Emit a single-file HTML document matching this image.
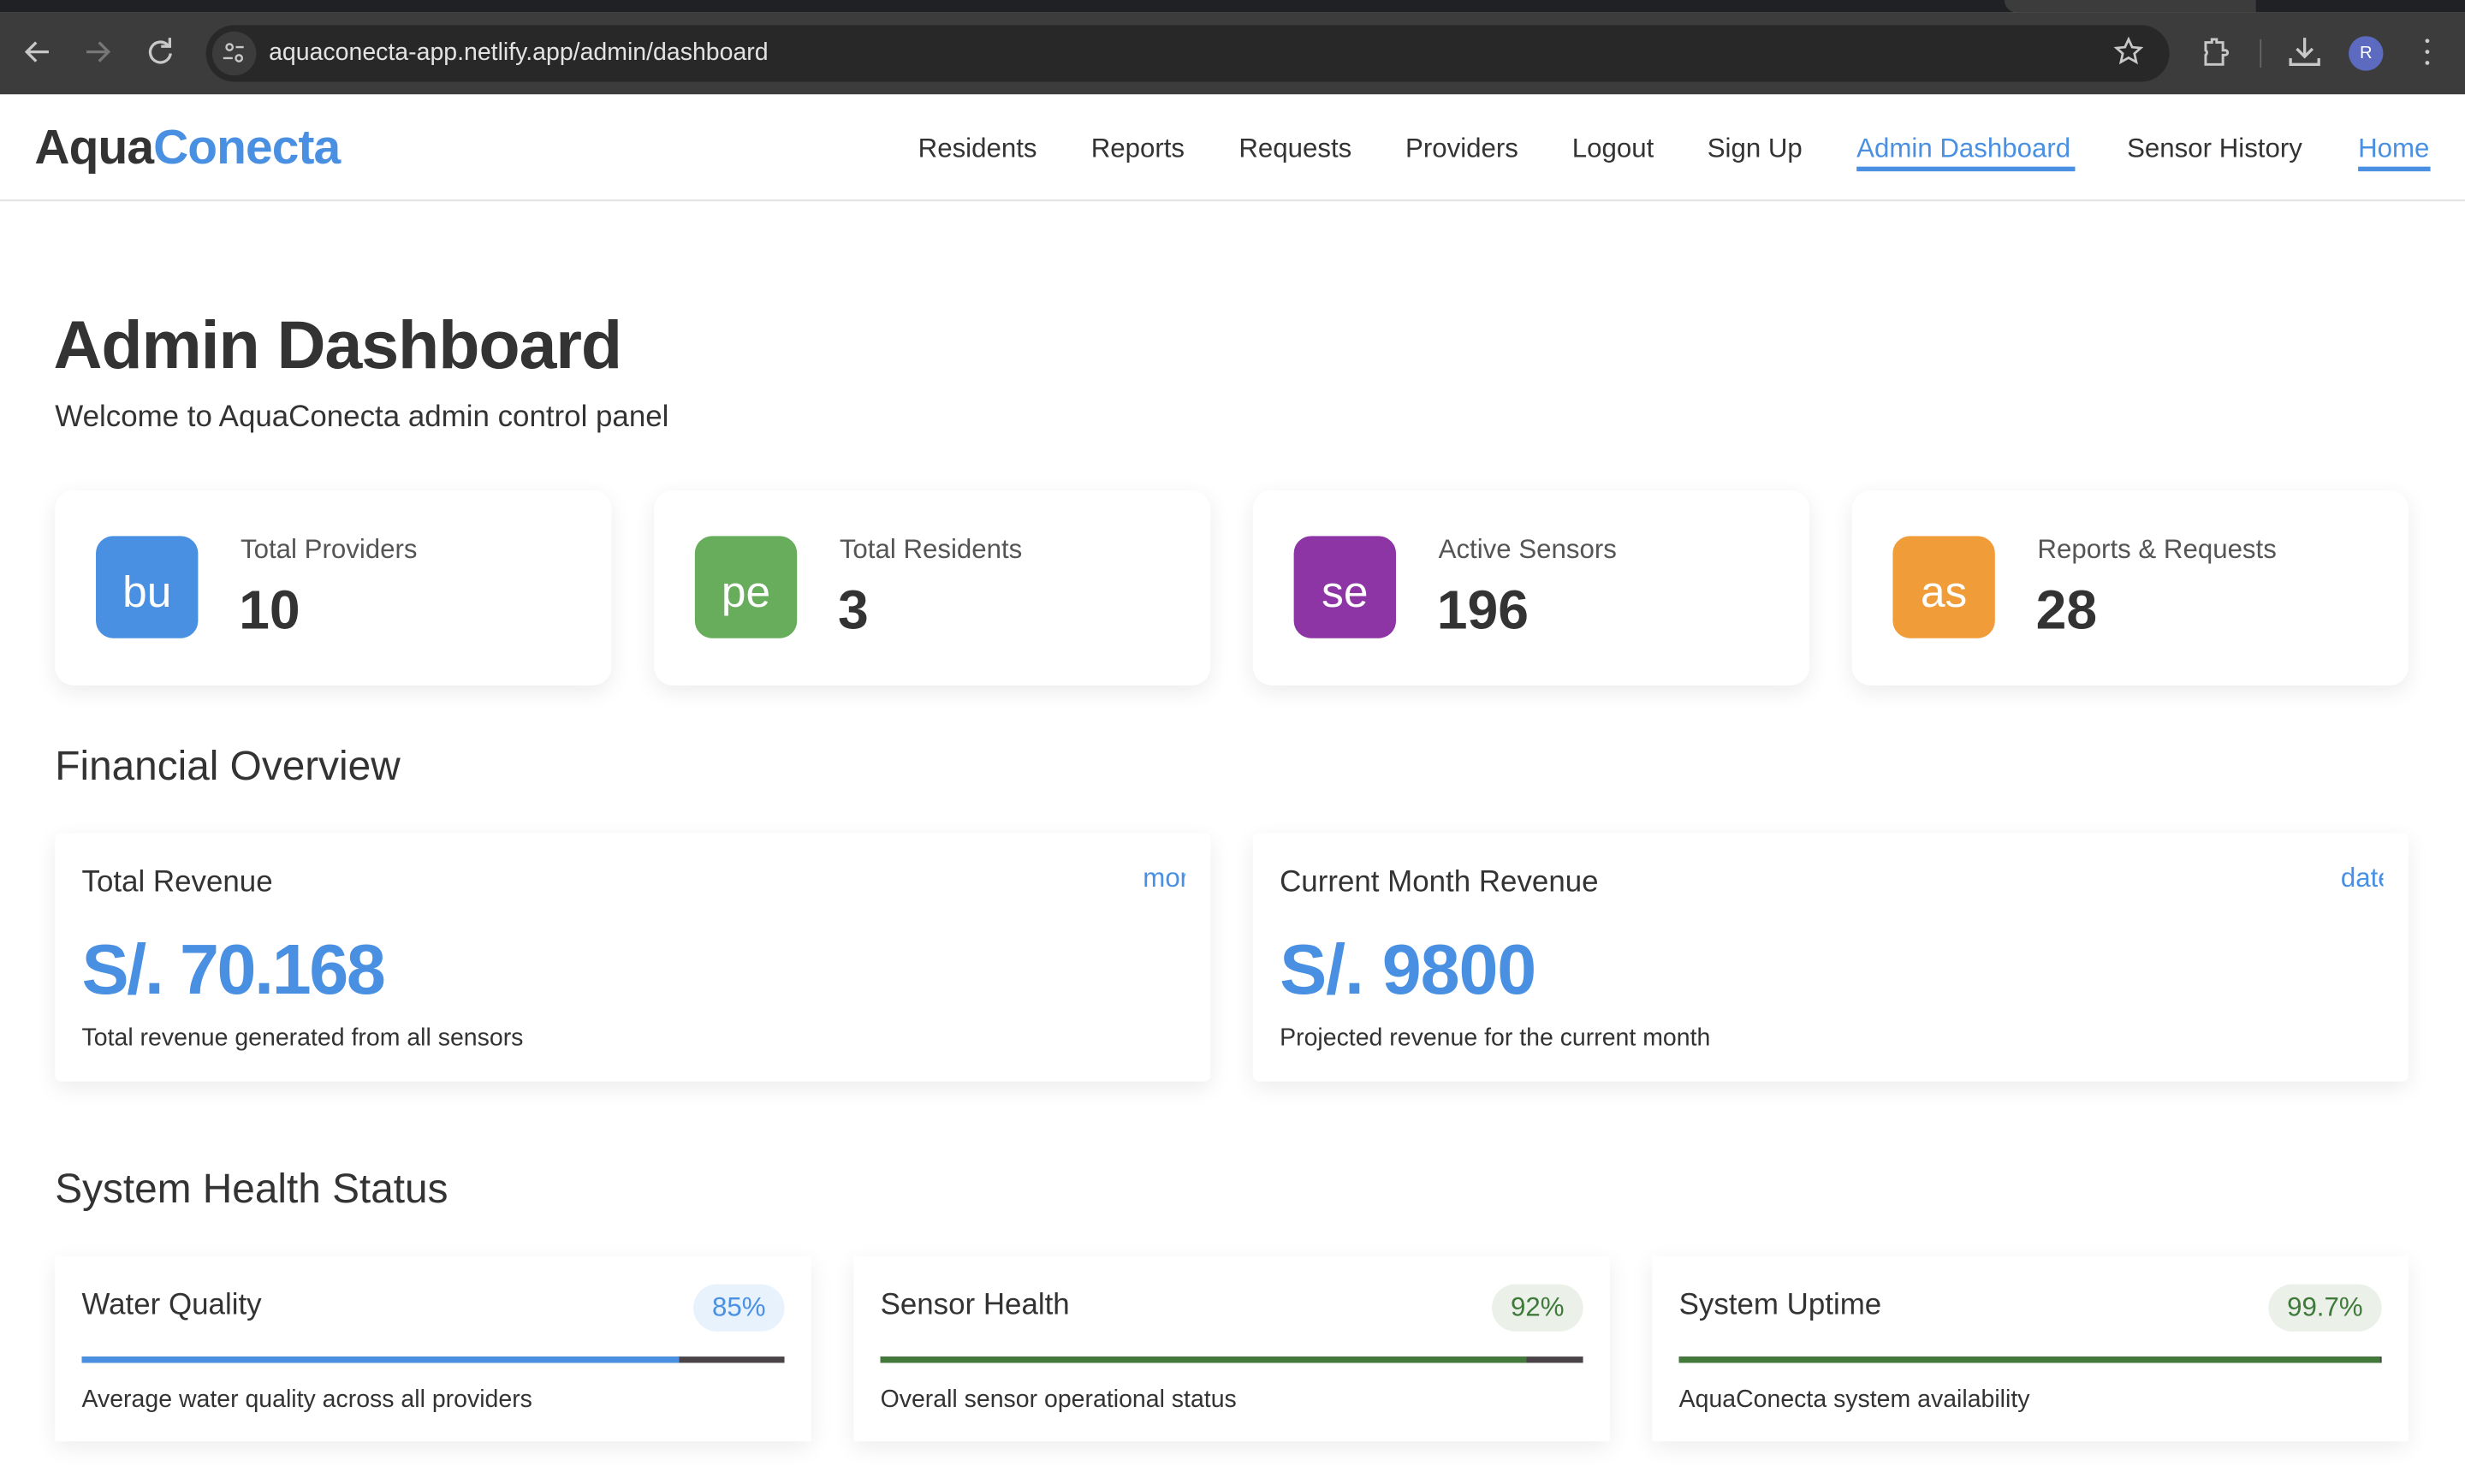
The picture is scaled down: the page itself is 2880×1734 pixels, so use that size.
<!DOCTYPE html>
<html><head><meta charset="utf-8"><style>
html,body{margin:0;padding:0;background:#fff;overflow:hidden;width:2880px;height:1734px}
#w{position:absolute;left:0;top:0;width:1568px;height:944px;transform:scale(1.836735);transform-origin:0 0;font-family:"Liberation Sans",Arial,sans-serif;color:#333}
.a{position:absolute;white-space:nowrap}
.card{position:absolute;background:#fff;box-shadow:0 4px 14px rgba(0,0,0,0.08)}
.ic{position:absolute;left:26px;top:29px;width:65px;height:65px;border-radius:11px;color:#fff;font-size:28px;line-height:72px;text-align:center}
.lbl{position:absolute;left:118px;top:28px;font-size:17px;color:#555}
.val{position:absolute;left:117px;top:57px;font-size:35px;font-weight:bold;color:#333}
.nav{position:absolute;top:85px;font-size:17px;color:#333}
.ttl{position:absolute;left:17px;top:21px;font-size:19px;color:#333}
.badge{position:absolute;top:18px;height:30px;line-height:30px;border-radius:15px;padding:0 12px;font-size:17px}
.bar{position:absolute;left:17px;right:17px;top:64px;height:4px;background:#4a4449}
.desc{position:absolute;left:17px;top:83px;font-size:15.5px;color:#333}
</style></head><body><div id="w">
<div class="a" style="left:0;top:0;width:1568px;height:8px;background:#202124"></div>
<div class="a" style="left:1275px;top:0;width:160px;height:8px;background:#3c3c3c;border-radius:0 0 0 8px"></div>
<div class="a" style="left:0;top:8px;width:1568px;height:52px;background:#3c3c3c"></div>
<div class="a" style="left:131px;top:16px;width:1249px;height:36px;background:#282828;border-radius:18px"></div>
<div class="a" style="left:135px;top:20px;width:28px;height:28px;background:#3c3c3c;border-radius:14px"></div>
<svg class="a" style="left:0;top:8px" width="1568" height="52" fill="none" stroke="#c8c8c8" stroke-width="1.8">
<path d="M31 25H17M23 19l-6 6 6 6"/>
<path d="M55 25h14M63 19l6 6-6 6" stroke="#777"/>
<path d="M107 21a6.5 6.5 0 1 0 1.5 5M108 16v5.5h-5.5"/>
<circle cx="146" cy="22" r="2" stroke-width="1.3"/><circle cx="152" cy="29" r="2" stroke-width="1.3"/><path d="M150 22h5M142 29h6" stroke-width="1.3"/>
<path d="M1354 17l2.3 5 5.4.5-4 3.6 1.2 5.4-4.9-2.8-4.9 2.8 1.2-5.4-4-3.6 5.4-.5z" stroke-width="1.5"/>
<path d="M1403 19h4v-2h3v2h4v5h1.5a1.5 1.5 0 0 1 0 3H1414v6h-11v-6a1.8 1.8 0 0 0 0-3z" stroke-width="1.6"/>
<path d="M1438 17v18" stroke="#666" stroke-width="1"/>
<path d="M1466 16v12M1461 23l5 5 5-5M1457 29v4h18v-4" stroke-width="1.8"/>
<circle cx="1544" cy="18" r="1.3" fill="#ccc" stroke="none"/><circle cx="1544" cy="25" r="1.3" fill="#ccc" stroke="none"/><circle cx="1544" cy="32" r="1.3" fill="#ccc" stroke="none"/>
</svg>
<div class="a" style="left:1494px;top:23px;width:22px;height:22px;border-radius:11px;background:#5c6bc0;color:#fff;font-size:11px;line-height:22px;text-align:center">R</div>
<div class="a" style="left:171px;top:25px;font-size:15.5px;color:#e3e3e3">aquaconecta-app.netlify.app/admin/dashboard</div>

<div class="a" style="left:0;top:127px;width:1568px;height:1px;background:#e0e0e0"></div>
<div class="a" style="left:22px;top:76px;font-size:31px;font-weight:bold;letter-spacing:-0.5px"><span style="color:#333">Aqua</span><span style="color:#4a90e2">Conecta</span></div>
<div class="nav" style="left:584px">Residents</div>
<div class="nav" style="left:694px">Reports</div>
<div class="nav" style="left:788px">Requests</div>
<div class="nav" style="left:894px">Providers</div>
<div class="nav" style="left:1000px">Logout</div>
<div class="nav" style="left:1086px">Sign Up</div>
<div class="nav" style="left:1181px;color:#4a90e2">Admin Dashboard</div>
<div class="a" style="left:1181px;top:106px;width:139px;height:3px;background:#4a90e2"></div>
<div class="nav" style="left:1353px">Sensor History</div>
<div class="nav" style="left:1500px;color:#4a90e2">Home</div>
<div class="a" style="left:1500px;top:106px;width:46px;height:3px;background:#4a90e2"></div>

<div class="a" style="left:34px;top:196px;font-size:43px;font-weight:bold;color:#333;letter-spacing:-0.6px">Admin Dashboard</div>
<div class="a" style="left:35px;top:255px;font-size:19px;color:#333">Welcome to AquaConecta admin control panel</div>

<div class="card" style="left:35px;top:312px;width:354px;height:124px;border-radius:12px"><div class="ic" style="background:#4a90e2">bu</div><div class="lbl">Total Providers</div><div class="val">10</div></div>
<div class="card" style="left:416px;top:312px;width:354px;height:124px;border-radius:12px"><div class="ic" style="background:#67ad5b">pe</div><div class="lbl">Total Residents</div><div class="val">3</div></div>
<div class="card" style="left:797px;top:312px;width:354px;height:124px;border-radius:12px"><div class="ic" style="background:#8e35a6">se</div><div class="lbl">Active Sensors</div><div class="val">196</div></div>
<div class="card" style="left:1178px;top:312px;width:354px;height:124px;border-radius:12px"><div class="ic" style="background:#f09c38">as</div><div class="lbl">Reports &amp; Requests</div><div class="val">28</div></div>

<div class="a" style="left:35px;top:472px;font-size:26px;color:#333">Financial Overview</div>
<div class="card" style="left:35px;top:530px;width:735px;height:158px;border-radius:4px;overflow:hidden"><div class="ttl">Total Revenue</div><div class="a" style="left:692px;top:19px;width:27px;overflow:hidden;font-size:17px;color:#4a90e2">more</div><div class="a" style="left:17px;top:61px;font-size:45px;font-weight:bold;color:#4a90e2;letter-spacing:-1.3px">S/. 70.168</div><div class="a" style="left:17px;top:122px;font-size:15.5px">Total revenue generated from all sensors</div></div>
<div class="card" style="left:797px;top:530px;width:735px;height:158px;border-radius:4px;overflow:hidden"><div class="ttl">Current Month Revenue</div><div class="a" style="left:692px;top:19px;width:27px;overflow:hidden;font-size:17px;color:#4a90e2">date</div><div class="a" style="left:17px;top:61px;font-size:45px;font-weight:bold;color:#4a90e2;letter-spacing:-0.6px">S/. 9800</div><div class="a" style="left:17px;top:122px;font-size:15.5px">Projected revenue for the current month</div></div>

<div class="a" style="left:35px;top:741px;font-size:26px;color:#333">System Health Status</div>
<div class="card" style="left:35px;top:799px;width:481px;height:118px"><div class="ttl">Water Quality</div><div class="badge" style="right:17px;background:#e8f2fd;color:#4a90e2">85%</div><div class="bar"><div style="width:85%;height:4px;background:#4a90e2"></div></div><div class="desc">Average water quality across all providers</div></div>
<div class="card" style="left:543px;top:799px;width:481px;height:118px"><div class="ttl">Sensor Health</div><div class="badge" style="right:17px;background:#ebf0e9;color:#3f7a3a">92%</div><div class="bar"><div style="width:92%;height:4px;background:#44793c"></div></div><div class="desc">Overall sensor operational status</div></div>
<div class="card" style="left:1051px;top:799px;width:481px;height:118px"><div class="ttl">System Uptime</div><div class="badge" style="right:17px;background:#ebf0e9;color:#3f7a3a">99.7%</div><div class="bar"><div style="width:99.7%;height:4px;background:#44793c"></div></div><div class="desc">AquaConecta system availability</div></div>
</div></body></html>
